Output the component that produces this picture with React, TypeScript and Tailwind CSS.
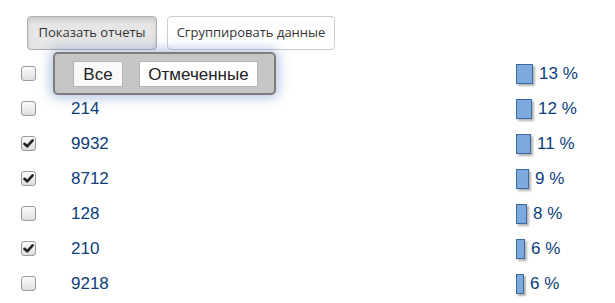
import React from 'react';

type Row = { id: number; checked: boolean; pct: number; bar: number };

const rows: Row[] = [
  { id: 835, checked: false, pct: 13, bar: 17 },
  { id: 214, checked: false, pct: 12, bar: 16 },
  { id: 9932, checked: true, pct: 11, bar: 15 },
  { id: 8712, checked: true, pct: 9, bar: 13 },
  { id: 128, checked: false, pct: 8, bar: 11 },
  { id: 210, checked: true, pct: 6, bar: 9 },
  { id: 9218, checked: false, pct: 6, bar: 8 },
];

function Check({ checked }: { checked: boolean }) {
  return (
    <span className="flex h-[15px] w-[15px] items-center justify-center rounded-[3px] border border-[#9a9a9a] bg-gradient-to-b from-[#fbfbfb] to-[#dedede]">
      {checked && (
        <svg width="11" height="11" viewBox="0 0 11 11">
          <path d="M1.5 5.8 L4.2 8.4 L9.6 2.4" fill="none" stroke="#222" strokeWidth="2.6" strokeLinecap="round" strokeLinejoin="round" />
        </svg>
      )}
    </span>
  );
}

export default function App() {
  return (
    <div className="relative h-[303px] w-[615px] overflow-hidden bg-white font-['Liberation_Sans',Arial,sans-serif]">
      {/* ─── Toolbar ─── */}
      <div className="flex gap-[10px] pl-[27px] pt-[16px] font-['Open_Sans',sans-serif] text-[13px] text-[#333]">
        <button className="h-[34px] w-[130px] rounded-[4px] border border-[#adadad] bg-[#e6e6e6] shadow-[inset_0_3px_5px_rgba(0,0,0,0.125)]">
          Показать отчеты
        </button>
        <button className="h-[34px] w-[168px] rounded-[4px] border border-[#cccccc] bg-white">
          Сгруппировать данные
        </button>
      </div>

      {/* ─── Rows ─── */}
      <div className="mt-[6px] flex flex-col">
        {rows.map((r) => (
          <div key={r.id} className="flex h-[35px] items-center pl-[21px] text-[17px] text-[#0b3d7a]">
            <Check checked={r.checked} />
            <span className="ml-[35px] w-[445px]">{r.id}</span>
            <span
              className="h-[20px] border border-[#3b6aa0] bg-[#7ea9df] shadow-[2px_2px_2px_rgba(0,0,0,0.3)]"
              style={{ width: r.bar }}
            />
            <span className="ml-[6px]">{r.pct} %</span>
          </div>
        ))}
      </div>

      {/* ─── Filter popup (lies over first row) ─── */}
      <div className="absolute left-[53px] top-[52px] flex h-[43px] w-[223px] items-center gap-[16px] rounded-[5px] border-2 border-[#7d7d7d] bg-[#c6c6c6] pl-[18px] shadow-[0_0_12px_3px_rgba(90,130,190,0.45)] text-[17px] text-[#222]">
        <button className="h-[26px] w-[50px] border border-[#b5b5b5] bg-white/90">Все</button>
        <button className="h-[26px] w-[119px] border border-[#b5b5b5] bg-white">Отмеченные</button>
      </div>
    </div>
  );
}
